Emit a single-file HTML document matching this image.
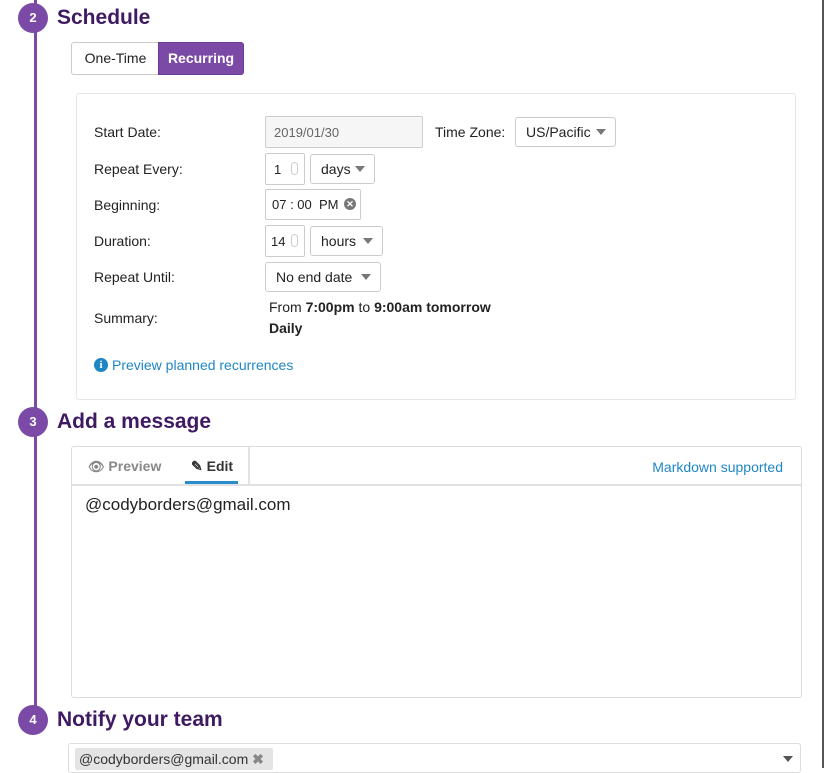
<!DOCTYPE html>
<html><head><meta charset="utf-8"><style>
*{box-sizing:border-box;margin:0;padding:0}
body{width:828px;height:768px;overflow:hidden;background:#fff;position:relative;font-family:"Liberation Sans",sans-serif;color:#222;font-size:14px}
.a{position:absolute}
.line{left:34px;top:0;width:3px;height:706px;background:#7b4aa6}
.circ{width:30px;height:30px;border-radius:50%;background:#7b4aa6;color:#fff;font-weight:bold;font-size:13px;text-align:center;line-height:30px}
.h{font-size:21px;font-weight:bold;color:#3f1a62;left:57px}
.lbl{left:94px;font-size:14px;color:#222}
.in{border:1px solid #ccc;border-radius:2px;background:#fff;font-size:13px;padding-left:8px;display:flex;align-items:center}
.sel{border:1px solid #ccc;border-radius:3px;background:#fff;font-size:14px;padding-left:10px;display:flex;align-items:center}
.caret{position:absolute;right:9px;top:50%;margin-top:-3px;border-left:5px solid transparent;border-right:5px solid transparent;border-top:6px solid #777}
.spin{position:absolute;right:6px;top:8px;width:7px;height:13px;border:1px solid #ccc;border-radius:4px}
</style></head><body>
<div class="a line"></div>
<div class="a" style="left:822px;top:0;width:2px;height:768px;background:#555"></div>

<div class="a circ" style="left:18px;top:3px">2</div>
<div class="a h" style="top:6px">Schedule</div>
<div class="a" style="left:71px;top:42px;width:88px;height:33px;border:1px solid #ccc;border-right:none;border-radius:3px 0 0 3px;font-size:14px;text-align:center;line-height:31px">One-Time</div>
<div class="a" style="left:158px;top:42px;width:86px;height:33px;background:#7b4aa6;border:1px solid #6a3a95;border-radius:0 3px 3px 0;color:#fff;font-size:14px;font-weight:bold;text-align:center;line-height:31px">Recurring</div>

<div class="a" style="left:76px;top:93px;width:720px;height:307px;border:1px solid #e6e6e6;border-radius:3px"></div>
<div class="a lbl" style="top:124px">Start Date:</div>
<div class="a lbl" style="top:161px">Repeat Every:</div>
<div class="a lbl" style="top:197px">Beginning:</div>
<div class="a lbl" style="top:233px">Duration:</div>
<div class="a lbl" style="top:269px">Repeat Until:</div>
<div class="a lbl" style="top:310px">Summary:</div>

<div class="a in" style="left:265px;top:116px;width:158px;height:32px;background:#f6f6f6;color:#666">2019/01/30</div>
<div class="a" style="left:435px;top:124px">Time Zone:</div>
<div class="a sel" style="left:515px;top:117px;width:101px;height:30px">US/Pacific<span class="caret"></span></div>

<div class="a in" style="left:265px;top:153px;width:40px;height:32px">1<span class="spin"></span></div>
<div class="a sel" style="left:310px;top:154px;width:65px;height:30px">days<span class="caret"></span></div>

<div class="a in" style="left:265px;top:189px;width:96px;height:31px;padding-left:6px">07 : 00 &nbsp;PM<span style="position:absolute;left:78px;top:8px;width:12px;height:12px;border-radius:50%;background:#777;color:#fff;font-size:9px;line-height:12px;text-align:center;font-weight:bold">✕</span></div>

<div class="a in" style="left:265px;top:225px;width:40px;height:32px;padding-left:5px">14<span class="spin"></span></div>
<div class="a sel" style="left:310px;top:226px;width:73px;height:30px">hours<span class="caret"></span></div>

<div class="a sel" style="left:265px;top:262px;width:116px;height:30px">No end date<span class="caret"></span></div>

<div class="a" style="left:269px;top:297px;line-height:21px">From <b>7:00pm</b> to <b>9:00am tomorrow</b><br><b>Daily</b></div>

<div class="a" style="left:94px;top:357px;color:#1f86c6;font-size:14px;display:flex;align-items:center"><span style="display:inline-block;width:14px;height:14px;border-radius:50%;background:#1f86c6;color:#fff;font-size:11px;font-weight:bold;line-height:14px;text-align:center;font-family:'Liberation Serif',serif;margin-right:4px">i</span>Preview planned recurrences</div>

<div class="a circ" style="left:18px;top:407px">3</div>
<div class="a h" style="top:410px">Add a message</div>

<div class="a" style="left:71px;top:446px;width:731px;height:252px;border:1px solid #ddd;border-radius:3px"></div>
<div class="a" style="left:72px;top:484px;width:729px;height:2px;background:#e2e2e2"></div>
<div class="a" style="left:248px;top:447px;width:2px;height:38px;background:#e2e2e2"></div>
<div class="a" style="left:88px;top:458px;color:#888;font-weight:bold;font-size:14px"><span style="font-size:13px">👁</span> Preview</div>
<div class="a" style="left:191px;top:458px;color:#333;font-weight:bold;font-size:14px">✎ Edit</div>
<div class="a" style="left:185px;top:481px;width:53px;height:3px;background:#2b8ccc"></div>
<div class="a" style="right:45px;top:459px;color:#1f86c6;font-size:14px">Markdown supported</div>
<div class="a" style="left:85px;top:495px;font-size:17px;color:#222">@codyborders@gmail.com</div>

<div class="a circ" style="left:18px;top:705px">4</div>
<div class="a h" style="top:708px">Notify your team</div>
<div class="a" style="left:68px;top:743px;width:733px;height:30px;border:1px solid #ddd;border-radius:3px"></div>
<div class="a" style="left:75px;top:748px;width:198px;height:22px;background:#e4e4e4;border-radius:2px;font-size:14px;padding-left:4px;line-height:22px;color:#333">@codyborders@gmail.com <span style="color:#888;font-weight:bold">✖</span></div>
<div class="a" style="left:783px;top:756px;border-left:5px solid transparent;border-right:5px solid transparent;border-top:6px solid #555"></div>
</body></html>
